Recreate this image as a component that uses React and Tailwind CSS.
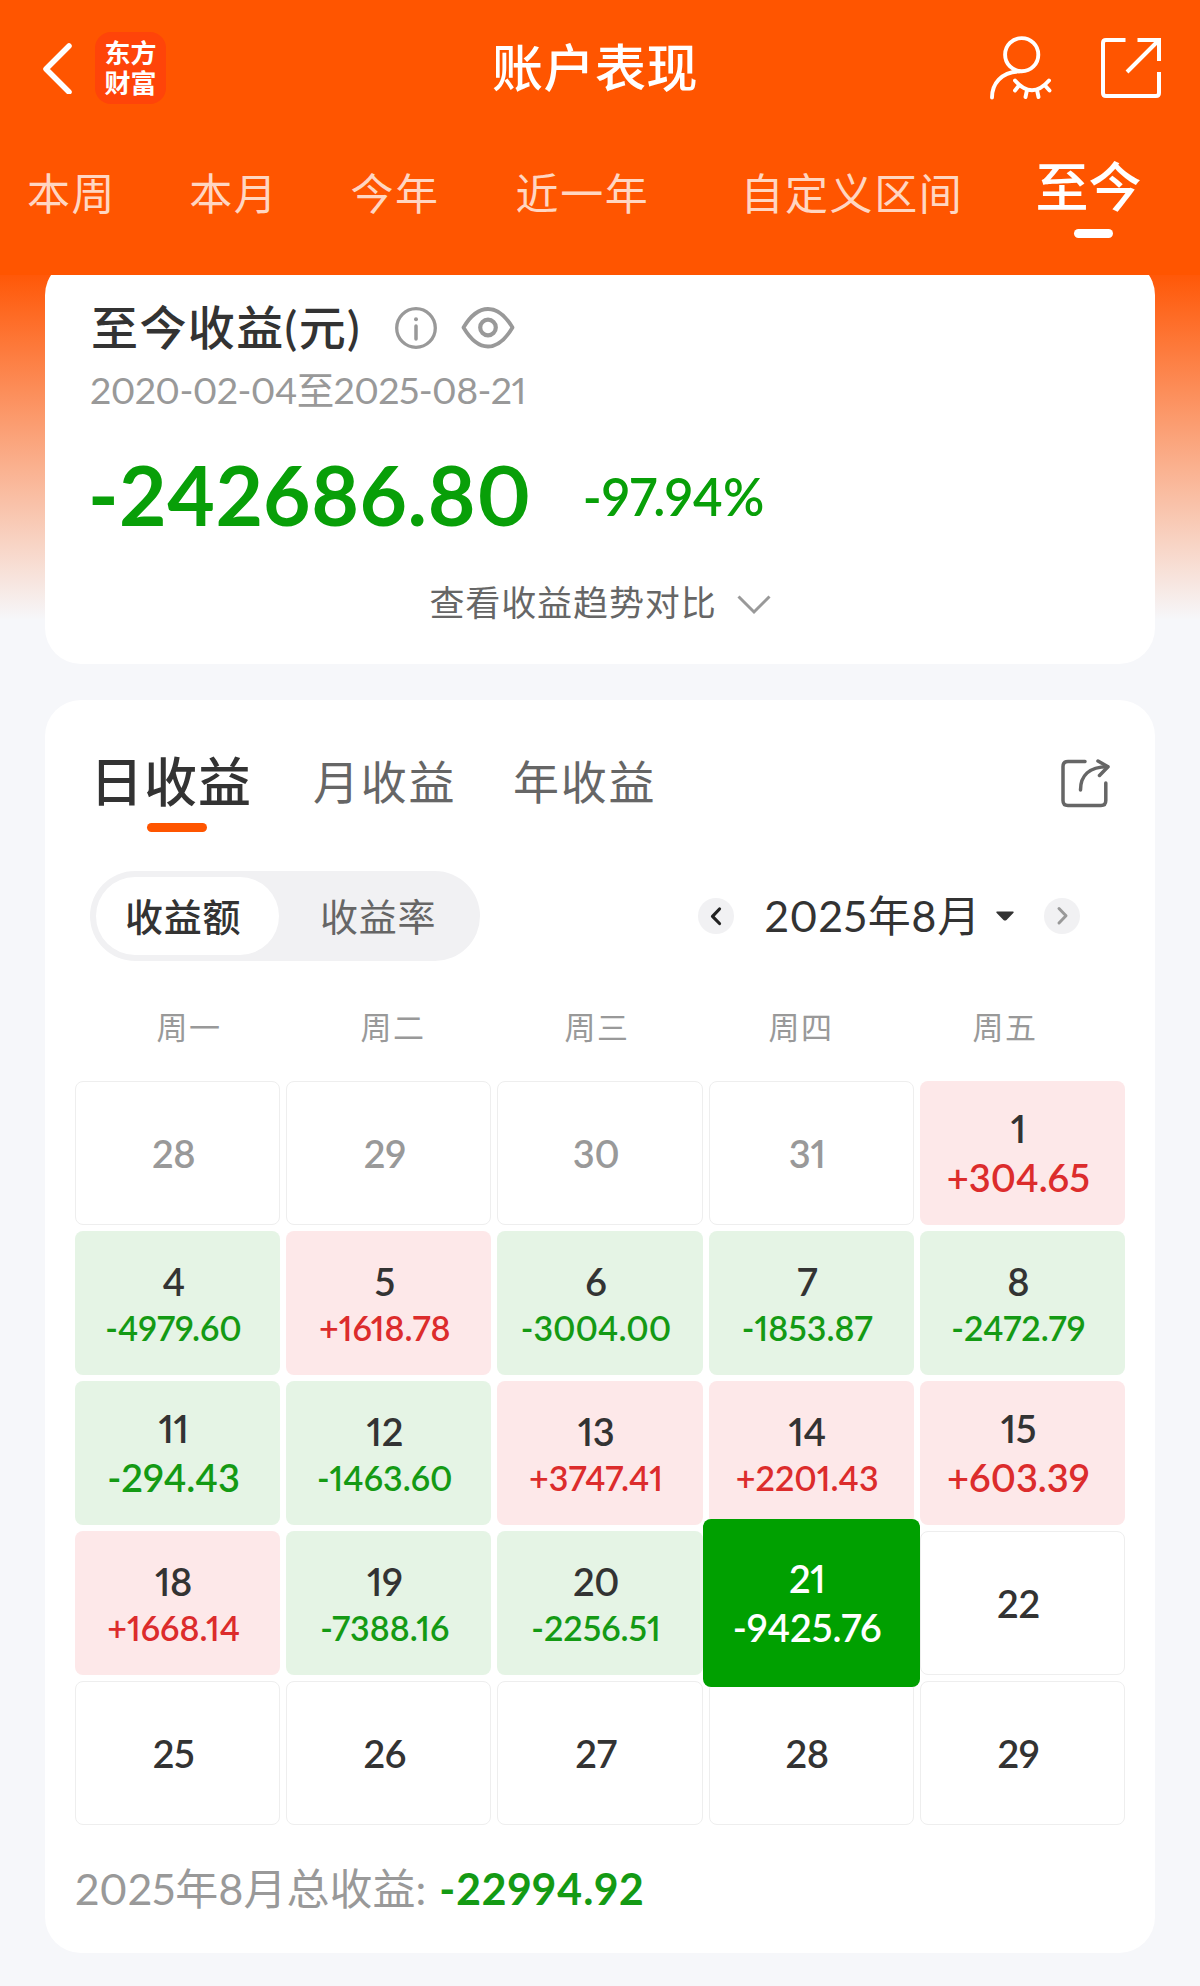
import React, { useState } from "react";
import clsx from "clsx";

const RANGES = [
  { label: "本周", gap: "ml-[27px]" },
  { label: "本月", gap: "ml-[73px]" },
  { label: "今年", gap: "ml-[72px]" },
  { label: "近一年", gap: "ml-[76px]" },
  { label: "自定义区间", gap: "ml-[91px]" },
  { label: "至今", gap: "ml-[72px]" },
];

const PROFIT_TABS = [
  { label: "日收益", gap: "" },
  { label: "月收益", gap: "ml-[61px]" },
  { label: "年收益", gap: "ml-[57px]" },
];

const WEEKDAYS = ["周一", "周二", "周三", "周四", "周五"];

// muted = belongs to the previous month
const DAYS = [
  { day: 28, muted: true },
  { day: 29, muted: true },
  { day: 30, muted: true },
  { day: 31, muted: true },
  { day: 1, value: "+304.65" },
  { day: 4, value: "-4979.60" },
  { day: 5, value: "+1618.78" },
  { day: 6, value: "-3004.00" },
  { day: 7, value: "-1853.87" },
  { day: 8, value: "-2472.79" },
  { day: 11, value: "-294.43" },
  { day: 12, value: "-1463.60" },
  { day: 13, value: "+3747.41" },
  { day: 14, value: "+2201.43" },
  { day: 15, value: "+603.39" },
  { day: 18, value: "+1668.14" },
  { day: 19, value: "-7388.16" },
  { day: 20, value: "-2256.51" },
  { day: 21, value: "-9425.76", selected: true },
  { day: 22 },
  { day: 25 },
  { day: 26 },
  { day: 27 },
  { day: 28 },
  { day: 29 },
];

const Header = () => {
  const [range, setRange] = useState("至今");

  return (
    <header className="h-[275px] bg-[#ff5500] text-white">
      <div className="grid h-[136px] grid-cols-[1fr_auto_1fr] items-center pl-[42px] pr-[37px]">
        <div className="flex items-center">
          <button type="button" aria-label="返回">
            <svg className="h-[52px] w-[30px]" viewBox="0 0 30 52" fill="none" stroke="currentColor" strokeWidth="5.5" strokeLinecap="round" strokeLinejoin="round">
              <path d="M27 4 L4 27 L27 50" />
            </svg>
          </button>
          <div className="ml-[23px] flex h-[72px] w-[71px] flex-col items-center justify-center rounded-[16px] bg-[#ff4409] text-[26px] font-bold leading-[30px]">
            <span>东方</span>
            <span>财富</span>
          </div>
        </div>

        <h1 className="mr-[15px] text-[51px] font-medium leading-[60px] tracking-[0.5px]">账户表现</h1>

        <div className="flex items-center justify-end gap-[44px]">
          <svg className="h-[68px] w-[68px]" viewBox="0 0 68 68" fill="none" stroke="currentColor" strokeWidth="3.9" strokeLinecap="round">
            <circle cx="34.7" cy="20.7" r="16.6" />
            <path d="M5 63.500 C5 50 14 38 32 37.400" />
            <path d="M28 46.500 Q45 66 62 46.500" />
            <path d="M32 51.500 L28 56.500 M40 56 L38.500 63 M50 56 L51.500 63 M58 51.500 L62.500 56.500" />
          </svg>
          <svg className="h-[64px] w-[64px]" viewBox="0 0 64 64" fill="none" stroke="currentColor" strokeWidth="4">
            <path d="M26.500 4 H7 Q4 4 4 7 V57 Q4 60 7 60 H57 Q60 60 60 57 V36" />
            <path d="M38.500 4 H60 V25 M60 4 L28 36" />
          </svg>
        </div>
      </div>

      <nav className="flex items-start">
        {RANGES.map(({ label, gap }) => {
          const active = label === range;
          return (
            <button
              key={label}
              type="button"
              onClick={() => setRange(label)}
              className={clsx(
                "flex flex-col items-start whitespace-nowrap",
                gap,
                active
                  ? "pt-[21px] text-[53px] font-medium leading-[60px]"
                  : "pt-[28px] text-[43px] leading-[60px] tracking-[1.6px] text-[#ffd6c2]"
              )}
            >
              {label}
              {active && <span className="ml-[39px] mt-[12px] h-[9px] w-[39px] rounded-full bg-white" />}
            </button>
          );
        })}
      </nav>
    </header>
  );
};

const SummaryCard = () => (
  <section className="mx-[45px] -mt-4 h-[405px] rounded-[36px] bg-white pl-[46px] pt-[38px]">
    <div className="flex h-[60px] items-center text-[#999999]">
      <h2 className="text-[47px] font-medium leading-[60px] tracking-[1.4px] text-[#333333]">至今收益(元)</h2>
      <svg className="ml-[34px] mt-[2px] h-[42px] w-[42px]" viewBox="0 0 42 42" fill="none" stroke="currentColor" strokeWidth="3.3">
        <circle cx="21" cy="21" r="19.3" />
        <circle cx="21" cy="12.300" r="2" fill="currentColor" stroke="none" />
        <path d="M21 19 V32" strokeWidth="3.5" strokeLinecap="round" />
      </svg>
      <svg className="ml-[24px] mt-[2px] h-[42px] w-[54px]" viewBox="0 0 54 42" fill="none" stroke="currentColor" strokeWidth="3.8" strokeLinejoin="round">
        <path d="M2.500 20.500 C9 9.500 17 2 27 2 C37 2 45 9.500 51.500 20.500 C45 31.500 37 39.500 27 39.500 C17 39.500 9 31.500 2.500 20.500 Z" />
        <circle cx="27" cy="20.500" r="7.800" strokeWidth="4.2" />
      </svg>
    </div>

    <p className="-ml-px mt-[11px] text-[37.5px] leading-[44px] tracking-[-0.6px] text-[#999999]">2020-02-04至2025-08-21</p>

    <div className="-ml-[3px] mt-[37px] flex h-[90px] items-center text-[#089f08]">
      <span className="text-[82px] font-bold leading-[90px] tracking-[0.6px]">-242686.80</span>
      <span className="ml-[51px] pt-[6px] text-[51px] font-semibold">-97.94%</span>
    </div>

    <button type="button" className="-ml-[46px] mt-[38px] flex h-[50px] w-[1110px] items-center justify-center text-[#666666]">
      <span className="text-[35px] leading-[50px] tracking-[0.9px]">查看收益趋势对比</span>
      <svg className="ml-[20px] mt-[6px] h-[22px] w-[34px]" viewBox="0 0 34 22" fill="none" stroke="#999999" strokeWidth="3">
        <path d="M1.500 2.500 L17 18 L32.500 2.500" />
      </svg>
    </button>
  </section>
);

const MonthPicker = () => (
  <div className="ml-auto flex items-center pr-[75px] text-[#333333]">
    <button type="button" aria-label="上个月" className="flex h-9 w-9 items-center justify-center rounded-full bg-[#f1f1f3]">
      <svg className="h-[20px] w-[14px]" viewBox="0 0 14 20" fill="none" stroke="#222222" strokeWidth="3.2" strokeLinecap="round" strokeLinejoin="round">
        <path d="M10.500 3 L3.500 10.300 L10.500 17.500" />
      </svg>
    </button>
    <span className="ml-[30px] text-[43px] leading-[60px] tracking-[0.7px]">2025年8月</span>
    <svg className="ml-[15px] h-[10px] w-[18px]" viewBox="0 0 18 10" fill="currentColor">
      <path d="M1 0.500 H17 Q18.300 1 17.300 2 L10.500 9 Q9 10 7.500 9 L0.700 2 Q-0.300 1 1 0.500 Z" />
    </svg>
    <button type="button" aria-label="下个月" className="ml-[30px] flex h-9 w-9 items-center justify-center rounded-full bg-[#f1f1f3]">
      <svg className="h-[20px] w-[14px]" viewBox="0 0 14 20" fill="none" stroke="#999999" strokeWidth="3" strokeLinecap="round" strokeLinejoin="round">
        <path d="M4 2.500 L11 9.800 L4 17" />
      </svg>
    </button>
  </div>
);

const DayCell = ({ day, value, muted, selected }) => {
  const up = value?.startsWith("+");
  const long = value?.length > 7 && !selected;

  return (
    <div
      className={clsx(
        "flex flex-col items-center justify-center rounded-[8px] pr-[8px] font-semibold",
        value && "pb-[2px]",
        selected && "relative z-10 -mx-[6px] -my-[12px] bg-[#00a000] text-white",
        !selected && !value && "border border-[#eeeeee]",
        !selected && value && (up ? "bg-[#fde8e9]" : "bg-[#e5f4e5]"),
        muted ? "text-[#999999]" : !selected && "text-[#333333]"
      )}
    >
      <span className="text-[38px] leading-[50px] tracking-[-0.3px]">{day}</span>
      {value && (
        <span
          className={clsx(
            long ? "text-[34px] leading-[43px]" : "text-[38px] leading-[48px]",
            !selected && (up ? "text-[#dc2c2c]" : "text-[#149a14]")
          )}
        >
          {value}
        </span>
      )}
    </div>
  );
};

const CalendarCard = () => {
  const [tab, setTab] = useState("日收益");

  return (
    <section className="mx-[45px] mt-[36px] h-[1253px] rounded-[36px] bg-white pt-[52px]">
      <div className="flex h-[80px] items-start pl-[45px] pr-[44px]">
        {PROFIT_TABS.map(({ label, gap }) => {
          const active = label === tab;
          return (
            <button
              key={label}
              type="button"
              onClick={() => setTab(label)}
              className={clsx(
                "flex flex-col items-start leading-[60px]",
                gap,
                active
                  ? "text-[53px] font-medium tracking-[1px] text-[#333333]"
                  : "text-[46px] tracking-[1.7px] text-[#666666]"
              )}
            >
              {label}
              {active && <span className="ml-[57px] mt-[11px] h-[9px] w-[60px] rounded-full bg-[#ff5500]" />}
            </button>
          );
        })}
        <svg className="ml-auto mt-[5px] h-[52px] w-[52px]" viewBox="0 0 52 52" fill="none" stroke="#666666" strokeWidth="3.5" strokeLinecap="round" strokeLinejoin="round">
          <path d="M26 4.500 H9 Q4 4.500 4 9.500 V43.500 Q4 48.500 9 48.500 H42 Q46.800 48.500 46.800 43.500 V26" />
          <path d="M21.500 33 C21.500 19 30 9.800 48.500 9.800" />
          <path d="M39 4 L49 9.800 L40.500 18.500" />
        </svg>
      </div>

      <div className="mt-[39px] flex h-[90px] items-center pl-[45px]">
        <div className="flex h-[90px] w-[390px] items-center rounded-full bg-[#f1f1f3] p-[6px] text-[38px] tracking-[0.7px]">
          <button type="button" className="h-[78px] w-[183px] rounded-full bg-white pl-[29px] text-left font-medium text-[#333333]">
            收益额
          </button>
          <button type="button" className="ml-[41px] text-[#666666]">收益率</button>
        </div>
        <MonthPicker />
      </div>

      <div className="mt-[46px] flex pl-[42px] text-[31px] leading-[40px] tracking-[1.4px] text-[#999999]">
        {WEEKDAYS.map((d) => (
          <span key={d} className="w-[204px] text-center">{d}</span>
        ))}
      </div>

      <div className="ml-[30px] mt-[34px] grid w-[1050px] auto-rows-[144px] grid-cols-5 gap-[6px]">
        {DAYS.map((d, i) => (
          <DayCell key={i} {...d} />
        ))}
      </div>

      <div className="mt-[39px] flex pl-[30px] text-[43px] leading-[50px] text-[#999999]">
        <span>2025年8月总收益:</span>
        <span className="ml-[13px] font-bold tracking-[0.9px] text-[#149a14]">-22994.92</span>
      </div>
    </section>
  );
};

const App = () => (
  <div className="h-[1986px] w-[1200px] overflow-hidden bg-[#f6f7fa] font-[Lato,'Noto_Sans_CJK_SC',sans-serif] proportional-nums">
    <Header />
    <main className="flex h-[1711px] flex-col overflow-hidden bg-[linear-gradient(to_bottom,#ff5808_0px,#f6f7fa_345px)]">
      <SummaryCard />
      <CalendarCard />
    </main>
  </div>
);

export default App;
